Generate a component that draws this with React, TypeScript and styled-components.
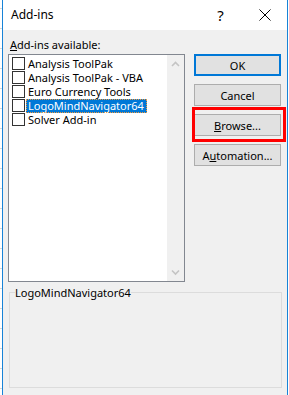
import React from 'react'
import styled, { createGlobalStyle } from 'styled-components'

const addIns = [
  { name: 'Analysis ToolPak', checked: false },
  { name: 'Analysis ToolPak - VBA', checked: false },
  { name: 'Euro Currency Tools', checked: false },
  { name: 'LogoMindNavigator64', checked: false },
  { name: 'Solver Add-in', checked: false },
]

const selectedName = 'LogoMindNavigator64'

const GlobalStyle = createGlobalStyle`
  html, body {
    margin: 0;
    padding: 0;
  }
  body {
    font-family: "Noto Sans", "Open Sans", sans-serif;
    font-size: 11px;
    color: #000000;
    background-color: #ffffff;
    background-image: repeating-linear-gradient(to bottom, #ffffff 0 8px, #d8d8d8 8px 9px, #ffffff 9px 20px);
    background-size: 2px 100%;
    background-repeat: no-repeat;
    overflow: hidden;
  }
`

const Dialog = styled.div`
  margin-left: 2px;
  width: 286px;
  height: 395px;
  box-sizing: border-box;
  border-left: 1px solid #1883d7;
  border-right: 1px solid #1883d7;
  background: #f0f0f0;
  display: flex;
  flex-direction: column;
`

const TitleBar = styled.div`
  height: 30px;
  flex: none;
  background: #ffffff;
  display: flex;
  align-items: center;
  padding-left: 8px;
`

const Title = styled.span`
  flex: 1;
  font-size: 12px;
  line-height: 30px;
`

const CaptionButton = styled.div<{ $width: number }>`
  width: ${(p) => p.$width}px;
  height: 30px;
  display: flex;
  align-items: center;
  justify-content: center;
  font-size: 15px;
  color: #000000;
`

const Body = styled.div`
  padding: 7px 6px 0 5px;
  display: grid;
  grid-template-columns: 177px 87px;
  column-gap: 9px;
`

const Caption = styled.div`
  grid-column: 1 / span 2;
  line-height: 15px;
  height: 15px;
  margin: 0 0 2px 2px;
`

const ListBox = styled.div`
  height: 228px;
  box-sizing: border-box;
  border: 1px solid #828790;
  background: #ffffff;
  display: flex;
`

const Items = styled.div`
  flex: 1;
  padding: 2px 0 0 3px;
  display: flex;
  flex-direction: column;
`

const Row = styled.div`
  height: 14px;
  display: flex;
  align-items: flex-start;
`

const CheckBox = styled.span`
  width: 13px;
  height: 13px;
  box-sizing: border-box;
  border: 1px solid #333333;
  background: #ffffff;
  flex: none;
`

const ItemLabel = styled.span<{ $selected?: boolean }>`
  margin-left: 1px;
  padding: 0 3px 0 2px;
  height: 14px;
  line-height: 13px;
  box-sizing: border-box;
  white-space: nowrap;
  color: ${(p) => (p.$selected ? '#ffffff' : '#000000')};
  background: ${(p) => (p.$selected ? '#0078d7' : 'transparent')};
  outline: ${(p) => (p.$selected ? '1px dotted #f39a3c' : 'none')};
  outline-offset: -1px;
`

const ScrollBar = styled.div`
  width: 17px;
  flex: none;
  background: #f0f0f0;
  display: flex;
  flex-direction: column;
  justify-content: space-between;
`

const ArrowButton = styled.div`
  height: 17px;
  display: flex;
  align-items: center;
  justify-content: center;
`

const Buttons = styled.div`
  display: flex;
  flex-direction: column;
  gap: 8px;
`

const Button = styled.div<{ $default?: boolean }>`
  height: 22px;
  box-sizing: border-box;
  border: ${(p) => (p.$default ? '2px solid #0078d7' : '1px solid #adadad')};
  background: #e1e1e1;
  display: flex;
  align-items: center;
  justify-content: center;
  white-space: nowrap;
  line-height: 15px;
`

const Marked = styled.div`
  position: relative;
  &::after {
    content: '';
    position: absolute;
    left: -2px;
    right: -5px;
    top: -7px;
    bottom: -6px;
    border: 3px solid #ff0000;
    pointer-events: none;
  }
`

const Key = styled.span`
  text-decoration: underline;
  text-underline-offset: 1px;
`

const GroupBox = styled.fieldset`
  margin: 3px 5px 0 6px;
  padding: 0 5px;
  height: 103px;
  box-sizing: border-box;
  border: 1px solid #dcdcdc;
  min-width: 0;
`

const Legend = styled.legend`
  padding: 0;
  line-height: 15px;
  color: #000000;
`

const Chevron: React.FC<{ up?: boolean }> = ({ up }) => (
  <svg width="9" height="7" viewBox="0 0 9 7">
    <polyline
      points={up ? '1,6 4.5,2.5 8,6' : '1,1.5 4.5,5 8,1.5'}
      fill="none"
      stroke="#c4c4c4"
      strokeWidth="1.6"
    />
  </svg>
)

const App: React.FC = () => {
  return (
    <>
      <GlobalStyle />
      <Dialog>
        <TitleBar>
          <Title>Add-ins</Title>
          <CaptionButton $width={45}>?</CaptionButton>
          <CaptionButton $width={44}>
            <svg width="12" height="12" viewBox="0 0 12 12">
              <path d="M0.5 0.5 L11.5 11.5 M11.5 0.5 L0.5 11.5" stroke="#000" strokeWidth="1" />
            </svg>
          </CaptionButton>
        </TitleBar>

        <Body>
          <Caption><Key>A</Key>dd-ins available:</Caption>
          <ListBox>
            <Items>
              {addIns.map((item) => (
                <Row key={item.name}>
                  <CheckBox />
                  <ItemLabel $selected={item.name === selectedName}>{item.name}</ItemLabel>
                </Row>
              ))}
            </Items>
            <ScrollBar>
              <ArrowButton><Chevron up /></ArrowButton>
              <ArrowButton><Chevron /></ArrowButton>
            </ScrollBar>
          </ListBox>

          <Buttons>
            <Button $default>OK</Button>
            <Button>Cancel</Button>
            <Marked>
              <Button><Key>B</Key>rowse...</Button>
            </Marked>
            <Button>A<Key>u</Key>tomation...</Button>
          </Buttons>
        </Body>

        <GroupBox>
          <Legend>{selectedName}</Legend>
        </GroupBox>
      </Dialog>
    </>
  )
}

export default App
